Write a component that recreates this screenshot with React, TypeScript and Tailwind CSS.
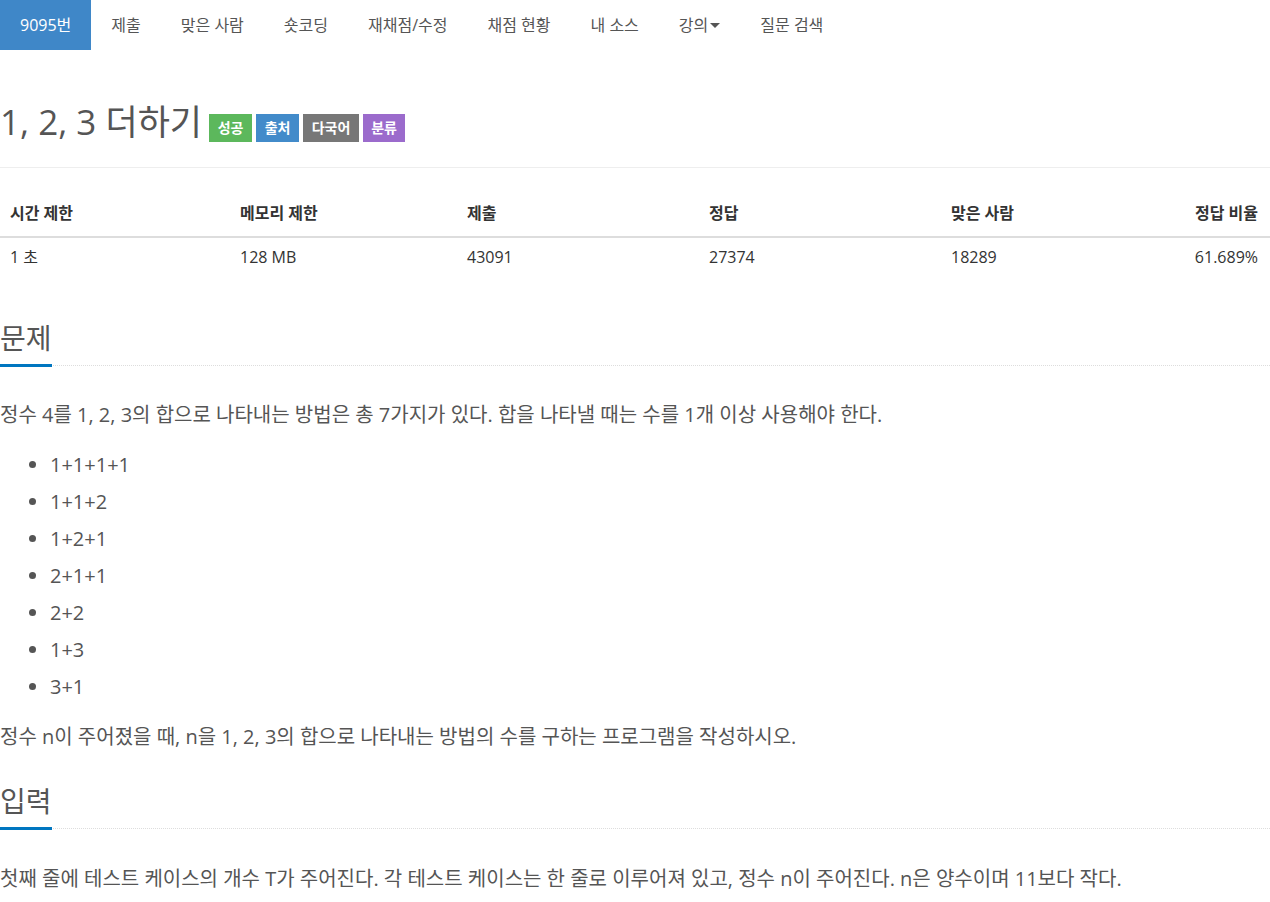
import React from 'react';

const FONT = "font-['Open_Sans','Noto_Sans_CJK_KR',sans-serif]";

const navItems = ['제출', '맞은 사람', '숏코딩', '재채점/수정', '채점 현황', '내 소스', '강의', '질문 검색'];

const labels = [
  { text: '성공', className: 'w-[43px] bg-[#5cb85c]' },
  { text: '출처', className: 'w-[43px] bg-[#428bca]' },
  { text: '다국어', className: 'w-[56px] bg-[#777777]' },
  { text: '분류', className: 'w-[42px] bg-[#9b6bcc]' },
];

const stats = [
  ['시간 제한', '1 초'],
  ['메모리 제한', '128 MB'],
  ['제출', '43091'],
  ['정답', '27374'],
  ['맞은 사람', '18289'],
  ['정답 비율', '61.689%'],
];

const sums = ['1+1+1+1', '1+1+2', '1+2+1', '2+1+1', '2+2', '1+3', '3+1'];

function Headline({ children, className = '' }: { children: string; className?: string }) {
  return (
    <div className={`flex border-b border-dotted border-[#dddddd] ${className}`}>
      <h2 className="mb-[-2px] border-b-[3px] border-[#0076c0] pb-[9px] text-[28px] leading-[34px] font-normal text-[#555555]">
        {children}
      </h2>
    </div>
  );
}

function Caret() {
  return (
    <svg width="10" height="5" viewBox="0 0 10 5" className="ml-[2px] inline-block">
      <path d="M0 0h10L5 5z" fill="#555555" />
    </svg>
  );
}

export default function App() {
  return (
    <div className={`min-h-screen w-[1270px] overflow-hidden bg-white ${FONT}`}>
      <nav className="flex h-[50px] text-[16px] leading-[50px] text-[#555555]">
        <a className="bg-[#3f87c8] px-5 text-white">9095번</a>
        {navItems.map((item) => (
          <a key={item} className="flex items-center px-5">
            {item}
            {item === '강의' && <Caret />}
          </a>
        ))}
      </nav>

      <div className="pt-[52px]">
        <div className="flex items-center">
          <h1 className="text-[35px] leading-[40px] font-normal text-[#555555]">1, 2, 3 더하기</h1>
          <div className="ml-[7px] mt-[11px] flex gap-[4px]">
            {labels.map((label) => (
              <span
                key={label.text}
                className={`h-[28px] text-center text-[14px] leading-[28px] font-bold text-white ${label.className}`}
              >
                {label.text}
              </span>
            ))}
          </div>
        </div>
        <div className="mt-[25px] border-t border-[#eeeeee]" />

        <div className="mt-[27px] grid grid-cols-[230px_227px_242px_242px_1fr_1fr] text-[16px] leading-[20px] text-[#333333]">
          {stats.map(([head], index) => (
            <div
              key={head}
              className={`border-b-2 border-[#dddddd] px-[10px] pt-[8px] pb-[13px] font-bold ${
                index === 5 ? 'pr-[12px] text-right' : ''
              }`}
            >
              {head}
            </div>
          ))}
          {stats.map(([head, value], index) => (
            <div
              key={`${head}-value`}
              className={`px-[10px] py-[9px] ${index === 5 ? 'pr-[12px] text-right' : ''}`}
            >
              {value}
            </div>
          ))}
        </div>

        <Headline className="mt-[45px]">문제</Headline>
        <div className="text-[20px] leading-[30px] text-[#555555]">
          <p className="mt-[34px]">정수 4를 1, 2, 3의 합으로 나타내는 방법은 총 7가지가 있다. 합을 나타낼 때는 수를 1개 이상 사용해야 한다.</p>
          <ul className="mt-[20px] list-disc space-y-[7px] pl-[50px]">
            {sums.map((sum) => (
              <li key={sum}>{sum}</li>
            ))}
          </ul>
          <p className="mt-[20px]">정수 n이 주어졌을 때, n을 1, 2, 3의 합으로 나타내는 방법의 수를 구하는 프로그램을 작성하시오.</p>
        </div>

        <Headline className="mt-[32px]">입력</Headline>
        <p className="mt-[35px] text-[20px] leading-[30px] text-[#555555]">
          첫째 줄에 테스트 케이스의 개수 T가 주어진다. 각 테스트 케이스는 한 줄로 이루어져 있고, 정수 n이 주어진다. n은 양수이며 11보다 작다.
        </p>
      </div>
    </div>
  );
}
